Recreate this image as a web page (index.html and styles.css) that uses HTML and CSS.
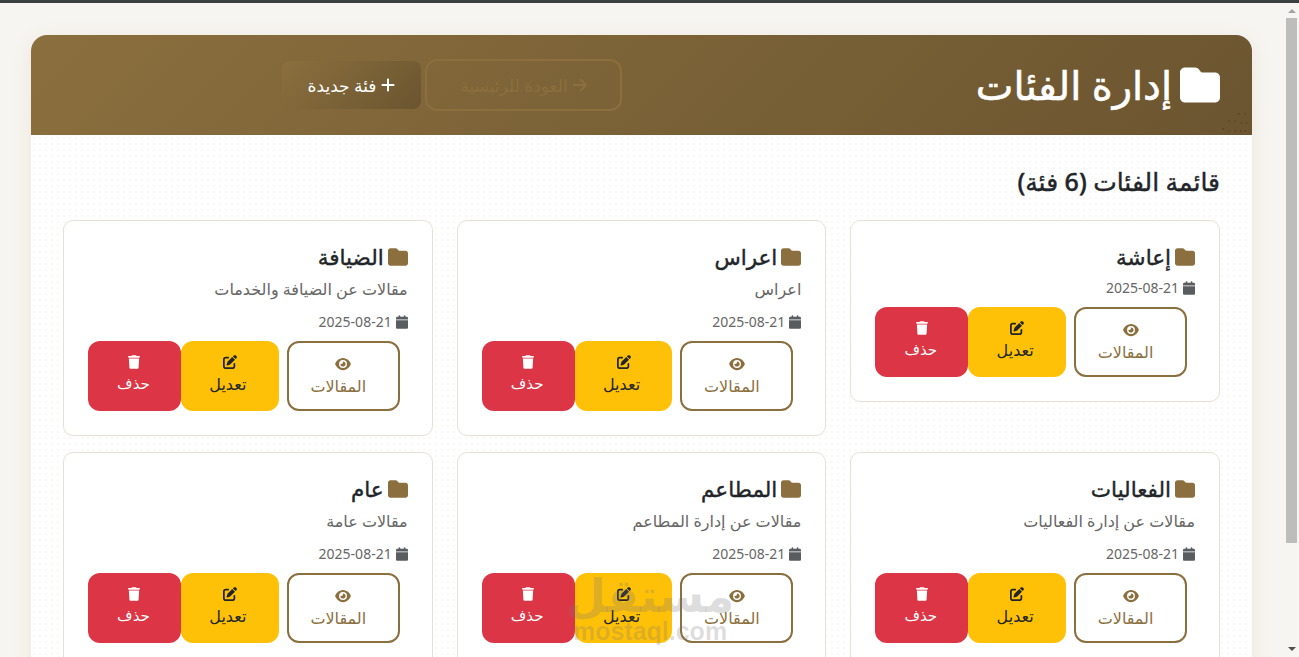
FILE: index.html
```html
<!DOCTYPE html>
<html lang="ar" dir="rtl">
<head>
    <meta charset="UTF-8">
    <meta name="viewport" content="width=device-width, initial-scale=1.0">
    <title>إدارة الفئات</title>
    <link rel="stylesheet" href="styles.css">
</head>
<body>
    <svg class="sprite" aria-hidden="true">
        <symbol id="i-folder" viewBox="0 0 512 512"><path d="M64 480H448c35.3 0 64-28.7 64-64V160c0-35.3-28.7-64-64-64H288c-10.1 0-19.6-4.7-25.6-12.8L243.2 57.6C231.1 41.5 212.1 32 192 32H64C28.7 32 0 60.7 0 96V416c0 35.3 28.7 64 64 64z"/></symbol>
        <symbol id="i-calendar" viewBox="0 0 448 512"><path d="M96 32V64H48C21.5 64 0 85.5 0 112v48H448V112c0-26.5-21.5-48-48-48H352V32c0-17.7-14.3-32-32-32s-32 14.3-32 32V64H160V32c0-17.7-14.3-32-32-32S96 14.3 96 32zM448 192H0V464c0 26.5 21.5 48 48 48H400c26.5 0 48-21.5 48-48V192z"/></symbol>
        <symbol id="i-eye" viewBox="0 0 576 512"><path d="M288 32c-80.8 0-145.5 36.8-192.6 80.6C48.6 156 17.3 208 2.5 243.7c-3.3 7.9-3.3 16.7 0 24.6C17.3 304 48.6 356 95.4 399.4C142.5 443.2 207.2 480 288 480s145.5-36.8 192.6-80.6c46.8-43.5 78.1-95.4 93-131.1c3.3-7.9 3.3-16.7 0-24.6c-14.9-35.7-46.2-87.7-93-131.1C433.5 68.8 368.8 32 288 32zM144 256a144 144 0 1 1 288 0 144 144 0 1 1 -288 0zm144-64c0 35.3-28.7 64-64 64c-7.1 0-13.9-1.2-20.3-3.3c-5.5-1.8-11.9 1.6-11.7 7.4c.3 6.9 1.3 13.8 3.2 20.7c13.7 51.2 66.4 81.6 117.6 67.9s81.6-66.4 67.9-117.6c-11.1-41.5-47.8-69.4-88.6-71.1c-5.8-.2-9.2 6.1-7.4 11.7c2.1 6.4 3.3 13.2 3.3 20.3z"/></symbol>
        <symbol id="i-edit" viewBox="0 0 512 512"><path d="M471.6 21.7c-21.9-21.9-57.3-21.9-79.2 0L362.3 51.7l97.9 97.9 30.1-30.1c21.9-21.9 21.9-57.3 0-79.2L471.6 21.7zm-299.2 220c-6.1 6.1-10.8 13.6-13.5 21.9l-29.6 88.8c-2.9 8.6-.6 18.1 5.8 24.6s15.9 8.7 24.6 5.8l88.8-29.6c8.2-2.7 15.7-7.4 21.9-13.5L437.7 172.3 339.7 74.3 172.4 241.7zM96 64C43 64 0 107 0 160V416c0 53 43 96 96 96H352c53 0 96-43 96-96V320c0-17.7-14.3-32-32-32s-32 14.3-32 32v96c0 17.7-14.3 32-32 32H96c-17.7 0-32-14.3-32-32V160c0-17.7 14.3-32 32-32h96c17.7 0 32-14.3 32-32s-14.3-32-32-32H96z"/></symbol>
        <symbol id="i-trash" viewBox="0 0 448 512"><path d="M135.2 17.7L128 32H32C14.3 32 0 46.3 0 64S14.3 96 32 96H416c17.7 0 32-14.3 32-32s-14.3-32-32-32H320l-7.2-14.3C307.4 6.8 296.3 0 284.2 0H163.8c-12.1 0-23.2 6.8-28.6 17.7zM416 128H32L53.2 467c1.6 25.3 22.6 45 47.9 45H346.9c25.3 0 46.3-19.7 47.9-45L416 128z"/></symbol>
        <symbol id="i-plus" viewBox="0 0 448 512"><path d="M256 80c0-17.7-14.3-32-32-32s-32 14.3-32 32V224H48c-17.7 0-32 14.3-32 32s14.3 32 32 32H192V432c0 17.7 14.3 32 32 32s32-14.3 32-32V288H400c17.7 0 32-14.3 32-32s-14.3-32-32-32H256V80z"/></symbol>
        <symbol id="i-arrow" viewBox="0 0 448 512"><path d="M438.6 278.6c12.5-12.5 12.5-32.8 0-45.3l-160-160c-12.5-12.5-32.8-12.5-45.3 0s-12.5 32.8 0 45.3L338.8 224 32 224c-17.7 0-32 14.3-32 32s14.3 32 32 32l306.7 0L233.4 393.4c-12.5 12.5-12.5 32.8 0 45.3s32.8 12.5 45.3 0l160-160z"/></symbol>
    </svg>

    <div class="topbar"></div>
    <div class="viewport">
        <div class="scrollbar">
            <span class="scroll-arrow"></span>
            <span class="scroll-thumb"></span>
            <span class="scroll-arrow-down"></span>
        </div>
        <main class="page">
            <div class="panel">
                <header class="panel-header">
                    <h1 class="panel-title"><svg class="icon"><use href="#i-folder"/></svg> إدارة الفئات</h1>
                    <nav class="header-actions">
                        <a class="btn-back"><svg class="icon"><use href="#i-arrow"/></svg> العودة للرئيسية</a>
                        <a class="btn-new"><svg class="icon"><use href="#i-plus"/></svg> فئة جديدة</a>
                    </nav>
                    <svg class="header-dots" viewBox="0 0 30 24">
                        <circle cx="17" cy="2.7" r=".7"/><circle cx="23.5" cy="2.7" r=".7"/>
                        <circle cx="7" cy="10" r=".7"/><circle cx="13" cy="10" r=".7"/>
                        <circle cx="19.5" cy="12" r=".7"/><circle cx="24.5" cy="12" r=".7"/>
                        <circle cx="1.3" cy="18" r=".7"/><circle cx="7" cy="20" r=".7"/>
                        <circle cx="13.5" cy="20" r=".7"/><circle cx="18.5" cy="20" r=".7"/><circle cx="23.5" cy="20" r=".7"/>
                    </svg>
                </header>
                <section class="panel-body">
                    <h2 class="list-title">قائمة الفئات (6 فئة)</h2>
                    <div class="cards">
                        <article class="card">
                            <h3 class="card-title"><svg class="icon"><use href="#i-folder"/></svg> إعاشة</h3>
                            <div class="card-date"><svg class="icon"><use href="#i-calendar"/></svg> 2025-08-21</div>
                            <div class="card-actions">
                                <a class="act act-view"><svg class="icon"><use href="#i-eye"/></svg><span>المقالات</span></a>
                                <a class="act act-edit"><svg class="icon"><use href="#i-edit"/></svg><span>تعديل</span></a>
                                <a class="act act-del"><svg class="icon"><use href="#i-trash"/></svg><span>حذف</span></a>
                            </div>
                        </article>
                        <article class="card">
                            <h3 class="card-title"><svg class="icon"><use href="#i-folder"/></svg> اعراس</h3>
                            <p class="card-desc">اعراس</p>
                            <div class="card-date"><svg class="icon"><use href="#i-calendar"/></svg> 2025-08-21</div>
                            <div class="card-actions">
                                <a class="act act-view"><svg class="icon"><use href="#i-eye"/></svg><span>المقالات</span></a>
                                <a class="act act-edit"><svg class="icon"><use href="#i-edit"/></svg><span>تعديل</span></a>
                                <a class="act act-del"><svg class="icon"><use href="#i-trash"/></svg><span>حذف</span></a>
                            </div>
                        </article>
                        <article class="card">
                            <h3 class="card-title"><svg class="icon"><use href="#i-folder"/></svg> الضيافة</h3>
                            <p class="card-desc">مقالات عن الضيافة والخدمات</p>
                            <div class="card-date"><svg class="icon"><use href="#i-calendar"/></svg> 2025-08-21</div>
                            <div class="card-actions">
                                <a class="act act-view"><svg class="icon"><use href="#i-eye"/></svg><span>المقالات</span></a>
                                <a class="act act-edit"><svg class="icon"><use href="#i-edit"/></svg><span>تعديل</span></a>
                                <a class="act act-del"><svg class="icon"><use href="#i-trash"/></svg><span>حذف</span></a>
                            </div>
                        </article>
                        <article class="card">
                            <h3 class="card-title"><svg class="icon"><use href="#i-folder"/></svg> الفعاليات</h3>
                            <p class="card-desc">مقالات عن إدارة الفعاليات</p>
                            <div class="card-date"><svg class="icon"><use href="#i-calendar"/></svg> 2025-08-21</div>
                            <div class="card-actions">
                                <a class="act act-view"><svg class="icon"><use href="#i-eye"/></svg><span>المقالات</span></a>
                                <a class="act act-edit"><svg class="icon"><use href="#i-edit"/></svg><span>تعديل</span></a>
                                <a class="act act-del"><svg class="icon"><use href="#i-trash"/></svg><span>حذف</span></a>
                            </div>
                        </article>
                        <article class="card">
                            <h3 class="card-title"><svg class="icon"><use href="#i-folder"/></svg> المطاعم</h3>
                            <p class="card-desc">مقالات عن إدارة المطاعم</p>
                            <div class="card-date"><svg class="icon"><use href="#i-calendar"/></svg> 2025-08-21</div>
                            <div class="card-actions">
                                <a class="act act-view"><svg class="icon"><use href="#i-eye"/></svg><span>المقالات</span></a>
                                <a class="act act-edit"><svg class="icon"><use href="#i-edit"/></svg><span>تعديل</span></a>
                                <a class="act act-del"><svg class="icon"><use href="#i-trash"/></svg><span>حذف</span></a>
                            </div>
                        </article>
                        <article class="card">
                            <h3 class="card-title"><svg class="icon"><use href="#i-folder"/></svg> عام</h3>
                            <p class="card-desc">مقالات عامة</p>
                            <div class="card-date"><svg class="icon"><use href="#i-calendar"/></svg> 2025-08-21</div>
                            <div class="card-actions">
                                <a class="act act-view"><svg class="icon"><use href="#i-eye"/></svg><span>المقالات</span></a>
                                <a class="act act-edit"><svg class="icon"><use href="#i-edit"/></svg><span>تعديل</span></a>
                                <a class="act act-del"><svg class="icon"><use href="#i-trash"/></svg><span>حذف</span></a>
                            </div>
                        </article>
                    </div>
                </section>
            </div>
        </main>
        <div class="watermark">
            <span class="watermark-ar">مستقل</span>
            <span class="watermark-en">mostaql.com</span>
        </div>
    </div>
</body>
</html>
```

FILE: styles.css
```css
* {
    box-sizing: border-box;
}
html, body {
    height: 100%;
    margin: 0;
    overflow: hidden;
}
body {
    display: flex;
    flex-direction: column;
    font-family: "Noto Sans", "DejaVu Sans", sans-serif;
    background: #f7f5f1;
    color: #212529;
}
.sprite {
    display: none;
}
.icon {
    fill: currentColor;
    flex: none;
}
.topbar {
    height: 3px;
    background: #3a3f42;
}
.viewport {
    flex: 1;
    display: flex;
    min-height: 0;
    position: relative;
}
.scrollbar {
    width: 15px;
    display: flex;
    flex-direction: column;
    align-items: center;
    flex: none;
}
.scroll-arrow {
    width: 0;
    height: 0;
    margin: 6px 0 5px;
    border-left: 4px solid transparent;
    border-right: 4px solid transparent;
    border-bottom: 4px solid #a3a3a3;
}
.scroll-thumb {
    width: 11px;
    height: 525px;
    background: #bdbdbb;
}
.scroll-arrow-down {
    width: 0;
    height: 0;
    margin: auto 0 6px;
    border-left: 4px solid transparent;
    border-right: 4px solid transparent;
    border-top: 4px solid #505050;
}
.page {
    flex: 1;
    min-width: 0;
    padding: 32px 32px 0 31px;
    overflow: hidden;
}
.panel {
    background: #fff;
    border-radius: 16px 16px 0 0;
    box-shadow: 0 4px 20px rgba(139, 111, 62, 0.1);
}
.panel-header {
    position: relative;
    height: 100px;
    padding: 0 32px;
    display: flex;
    align-items: center;
    justify-content: space-between;
    border-radius: 16px 16px 0 0;
    background: linear-gradient(135deg, #8b6f3e, #6b5530);
    overflow: hidden;
}
.panel-title {
    margin: 0;
    display: flex;
    align-items: center;
    gap: 8px;
    font-size: 40px;
    line-height: 44px;
    font-weight: 500;
    -webkit-text-stroke: 0.6px #fff;
    color: #fff;
}
.panel-title .icon {
    width: 40px;
    height: 40px;
}
.header-actions {
    display: flex;
    align-items: center;
    gap: 4px;
    margin-inline-end: 219px;
}
.btn-back {
    display: flex;
    align-items: center;
    justify-content: center;
    gap: 5px;
    width: 197px;
    height: 52px;
    border: 2px solid #8b6f3e;
    border-radius: 12px;
    font-size: 17px;
    color: #8b6f3e;
}
.btn-back .icon {
    width: 14px;
    height: 16px;
}
.btn-new {
    display: flex;
    align-items: center;
    justify-content: center;
    gap: 5px;
    width: 139px;
    height: 48px;
    border-radius: 8px;
    font-size: 17px;
    color: #fff;
    background: linear-gradient(135deg, #8b6f3e, #6b5530);
}
.btn-new .icon {
    width: 14px;
    height: 16px;
}
.header-dots {
    position: absolute;
    right: 0;
    bottom: 0;
    width: 30px;
    height: 24px;
    fill: #4a3a1e;
}
.panel-body {
    padding: 32px;
    background: radial-gradient(circle, rgba(139, 111, 62, 0.05) 0.7px, transparent 1px) 0 0 / 6px 6px;
}
.list-title {
    margin: 0 0 24px;
    font-size: 25px;
    line-height: 29px;
    font-weight: 500;
    -webkit-text-stroke: 0.4px #212529;
    color: #212529;
}
.cards {
    display: grid;
    grid-template-columns: repeat(3, minmax(0, 1fr));
    gap: 16px 24px;
    align-items: start;
}
.card {
    padding: 24px;
    border: 1px solid #e8e0d5;
    border-radius: 10px;
    background: #fff;
}
.card-title {
    margin: 0 0 9px;
    display: flex;
    align-items: center;
    gap: 4px;
    font-size: 21.5px;
    line-height: 24px;
    font-weight: 500;
    -webkit-text-stroke: 0.4px #212529;
}
.card-title .icon {
    width: 20px;
    height: 20px;
    color: #8b6f3e;
}
.card-desc {
    margin: 0 0 11px;
    font-size: 16px;
    line-height: 23px;
    color: #666;
}
.card-date {
    display: flex;
    align-items: center;
    gap: 4px;
    height: 19px;
    margin-bottom: 10px;
    font-size: 14px;
    color: #666;
}
.card-date .icon {
    width: 12px;
    height: 14px;
    color: #5a5d60;
}
.card-actions {
    display: flex;
    margin-inline-start: 8px;
}
.act {
    display: flex;
    flex-direction: column;
    align-items: center;
    justify-content: center;
    gap: 4px;
    height: 70px;
    border-radius: 12px;
    font-size: 16px;
}
.act-view {
    width: 113px;
    margin-inline-end: 8px;
    padding-top: 2px;
    border: 2px solid #8b6f3e;
    color: #8b6f3e;
}
.act-view .icon {
    width: 16px;
    height: 14px;
}
.act-view span {
    padding-inline-start: 10px;
}
.act-edit {
    width: 98px;
    padding-bottom: 2px;
    background: #ffc107;
    color: #212529;
}
.act-edit .icon {
    width: 14px;
    height: 14px;
}
.act-edit span {
    padding-inline-start: 4px;
}
.act-del {
    width: 93px;
    padding-bottom: 5px;
    background: #dc3545;
    color: #fff;
    font-size: 15px;
}
.act-del .icon {
    width: 12px;
    height: 14px;
}
.act-del span {
    padding-inline-start: 2px;
}
.watermark {
    position: absolute;
    left: 572px;
    top: 566px;
    width: 156px;
    display: flex;
    flex-direction: column;
    align-items: center;
    color: rgba(120, 120, 120, 0.25);
    pointer-events: none;
}
.watermark-ar {
    font-size: 46px;
    line-height: 50px;
    font-weight: 700;
}
.watermark-en {
    font-size: 25px;
    line-height: 24px;
    font-weight: 700;
    font-family: "Liberation Sans", sans-serif;
}
```
